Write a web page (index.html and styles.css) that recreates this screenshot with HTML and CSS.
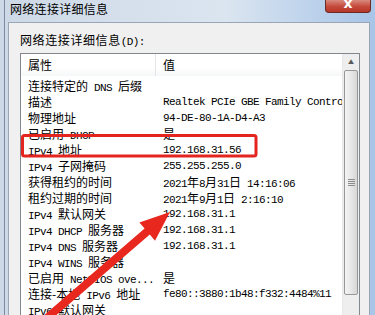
FILE: index.html
```html
<!DOCTYPE html>
<html lang="zh-CN">
<head>
  <meta charset="UTF-8" />
  <title>网络连接详细信息</title>
  <link rel="stylesheet" href="styles.css">
</head>
<body>
  <div class="window">
    <div class="titlebar">
      <span class="title">网络连接详细信息</span>
      <span class="close">x</span>
    </div>
    <div class="panel">
      <div class="caption">网络连接详细信息<span class="m">(D):</span></div>
      <div class="listview">
        <div class="list-body">
          <div class="head"><span>属性</span><span>值</span></div>
          <div class="row"><span>连接特定的<span class="m"> DNS </span>后缀</span><span></span></div>
          <div class="row"><span>描述</span><span class="m">Realtek PCIe GBE Family Controller</span></div>
          <div class="row"><span>物理地址</span><span class="m">94-DE-80-1A-D4-A3</span></div>
          <div class="row"><span>已启用<span class="m"> DHCP</span></span><span>是</span></div>
          <div class="row"><span><span class="m">IPv4 </span>地址</span><span class="m">192.168.31.56</span></div>
          <div class="row"><span><span class="m">IPv4 </span>子网掩码</span><span class="m">255.255.255.0</span></div>
          <div class="row"><span>获得租约的时间</span><span><span class="m">2021</span>年<span class="m">8</span>月<span class="m">31</span>日<span class="m"> 14:16:06</span></span></div>
          <div class="row"><span>租约过期的时间</span><span><span class="m">2021</span>年<span class="m">9</span>月<span class="m">1</span>日<span class="m"> 2:16:10</span></span></div>
          <div class="row"><span><span class="m">IPv4 </span>默认网关</span><span class="m">192.168.31.1</span></div>
          <div class="row"><span><span class="m">IPv4 DHCP </span>服务器</span><span class="m">192.168.31.1</span></div>
          <div class="row"><span><span class="m">IPv4 DNS </span>服务器</span><span class="m">192.168.31.1</span></div>
          <div class="row"><span><span class="m">IPv4 WINS </span>服务器</span><span></span></div>
          <div class="row"><span>已启用<span class="m"> NetBIOS ove...</span></span><span>是</span></div>
          <div class="row"><span>连接-本地<span class="m"> IPv6 </span>地址</span><span class="m">fe80::3880:1b48:f332:4484%11</span></div>
          <div class="row"><span><span class="m">IPv6 </span>默认网关</span><span></span></div>
        </div>
        <div class="scrollbar">
          <div class="sb-up">▲</div>
          <div class="sb-thumb"><span class="grip"></span></div>
        </div>
      </div>
    </div>
  </div>

  <svg class="marks" width="375" height="315" viewBox="0 0 375 315">
    <rect x="22.5" y="135.5" width="233.5" height="20.5" rx="2" fill="none" stroke="#e3241f" stroke-width="3"/>
    <polygon fill="#e8281e" points="170,212 155,240.7 149.8,234.6 42.6,327 37.4,321 144.6,228.6 139.4,222.5"/>
  </svg>
</body>
</html>
```

FILE: styles.css
```css
body {
  margin: 0;
  width: 375px;
  height: 315px;
  overflow: hidden;
  position: relative;
  font-family: "Noto Sans CJK SC", sans-serif;
  font-size: 12px;
  color: #000;
  background: linear-gradient(to right, #cdd9e6, #dbe5f0 60%, #a9c6e8 98%);
}
.m {
  font-family: "Liberation Mono", "DejaVu Sans Mono", monospace;
  font-size: 11px;
  letter-spacing: -0.6px;
}
.window {
  margin-left: 4px;
  border-left: 1px solid #7d8c9e;
  height: 315px;
}
.titlebar {
  height: 22px;
  display: flex;
  justify-content: space-between;
  align-items: flex-start;
}
.title {
  margin: 1px 0 0 5px;
  line-height: 16px;
  font-size: 12px;
  letter-spacing: 0.3px;
}
.close {
  width: 44px;
  height: 12px;
  margin-right: 4px;
  background: linear-gradient(#d98a7e, #c4493a 55%, #b7362a);
  border: 1px solid #6b2a24;
  border-top: none;
  border-radius: 0 0 4px 4px;
  color: #fff;
  font: bold 14px "DejaVu Sans", sans-serif;
  line-height: 6px;
  text-align: center;
}
.panel {
  margin: 0 5px 0 3px;
  height: 300px;
  background: #f0f0f0;
  border: 1px solid #9aa6b5;
  border-bottom: none;
  padding: 9px 0 0 11px;
  box-sizing: border-box;
}
.caption {
  line-height: 16px;
  letter-spacing: 0.6px;
  margin-bottom: 3px;
}
.listview {
  width: 340px;
  height: 280px;
  box-sizing: border-box;
  border: 1px solid #828790;
  background: #fff;
  display: flex;
}
.list-body {
  flex: 1;
  overflow: hidden;
}
.head {
  display: grid;
  grid-template-columns: 135px 1fr;
  height: 22px;
  line-height: 22px;
  margin-bottom: 2px;
  background: linear-gradient(#fff, #fff 60%, #f6f7f8);
}
.head span {
  padding-left: 7px;
}
.head span:first-child {
  border-right: 1px solid #e3e5e8;
}
.row {
  display: grid;
  grid-template-columns: 135px 1fr;
  height: 16px;
  line-height: 16px;
  white-space: nowrap;
}
.row > span {
  padding-left: 7px;
  overflow: hidden;
}
.scrollbar {
  width: 17px;
  background: #eeeeee;
  border-left: 1px solid #e8e8e8;
  box-sizing: border-box;
  padding: 0 1px;
}
.sb-up {
  height: 16px;
  line-height: 16px;
  text-align: center;
  font-size: 6px;
  color: #5a5a5a;
}
.sb-thumb {
  height: 225px;
  border: 1px solid #979797;
  border-radius: 2px;
  box-sizing: border-box;
  background: linear-gradient(to right, #f4f4f4, #e7e7e7 50%, #d6d6d6);
  display: flex;
  align-items: center;
  justify-content: center;
}
.grip {
  width: 7px;
  height: 7px;
  background: repeating-linear-gradient(#8c8c8c 0 1px, transparent 1px 2px);
}
.marks {
  position: absolute;
  left: 0;
  top: 0;
  pointer-events: none;
}
```
